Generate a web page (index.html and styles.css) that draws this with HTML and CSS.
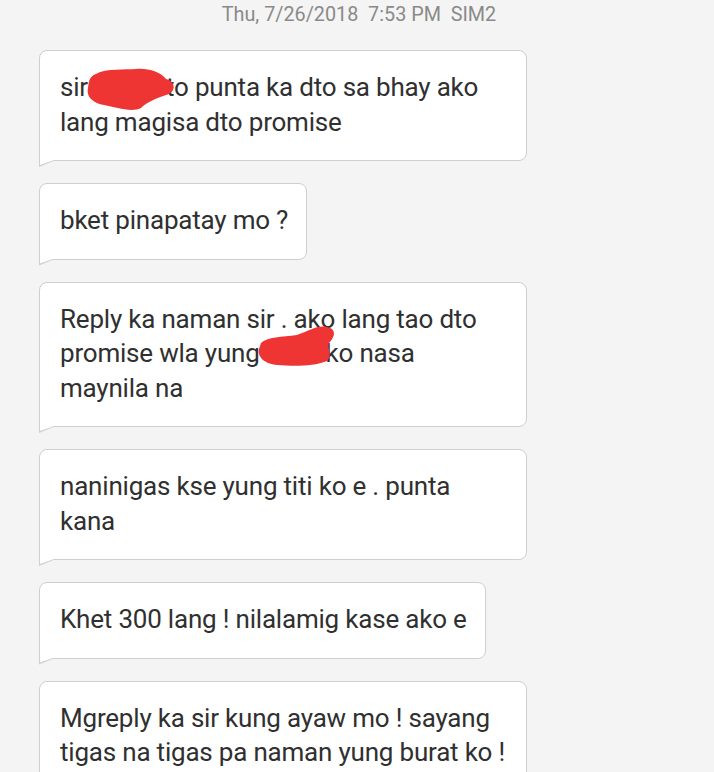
FILE: index.html
```html
<!DOCTYPE html>
<html lang="tl">
<head>
    <meta charset="UTF-8">
    <meta name="viewport" content="width=device-width, initial-scale=1.0">
    <title>Messages</title>
    <link rel="stylesheet" href="styles.css">
</head>
<body>
    <div class="thread">
        <div class="stamp">Thu, 7/26/2018  7:53 PM  SIM2</div>

        <div class="bubble">sir<span class="redact r1"><svg viewBox="0 0 90 46" width="90" height="46"><path d="M10 8 C20 2 40 4 50 3 C62 2 75 6 80 13 C88 15 91 23 83 28 C71 32 61 36 55 42 C45 47 30 41 18 39 C6 37 0 30 2 22 C3 14 4 10 10 8 Z"/></svg></span>to punta ka dto sa bhay ako lang magisa dto promise</div>

        <div class="bubble">bket pinapatay mo ?</div>

        <div class="bubble">Reply ka naman sir . ako lang tao dto promise wla yung<span class="redact r2"><svg viewBox="0 0 80 42" width="80" height="42"><path d="M4 18 C10 12 25 12 40 10 C52 6 60 0 70 2 C80 4 78 12 72 18 C70 24 76 30 70 36 C55 42 35 41 20 40 C8 39 0 32 2 24 Z"/></svg></span>ko nasa maynila na</div>

        <div class="bubble">naninigas kse yung titi ko e . punta kana</div>

        <div class="bubble">Khet 300 lang ! nilalamig kase ako e</div>

        <div class="bubble">Mgreply ka sir kung ayaw mo ! sayang tigas na tigas pa naman yung burat ko !</div>
    </div>
</body>
</html>
```

FILE: styles.css
```css
body {
    margin: 0;
    background-color: #f4f4f4;
    font-family: Roboto, "Noto Sans", sans-serif;
    color: #303030;
}
.thread {
    display: flex;
    flex-direction: column;
    align-items: flex-start;
    padding: 0 0 0 39px;
    height: 772px;
    overflow: hidden;
}
.stamp {
    align-self: stretch;
    margin-left: -35px;
    height: 30px;
    line-height: 30px;
    margin-bottom: 20px;
    text-align: center;
    font-size: 19.8px;
    color: #8a8a8a;
    white-space: pre;
}
.bubble {
    position: relative;
    flex-shrink: 0;
    max-width: 448px;
    padding: 19px 18px 21px 20px;
    margin-bottom: 22px;
    background: white;
    border: 1px solid #cfcfcf;
    border-radius: 8px 8px 8px 0;
    font-size: 26px;
    letter-spacing: -0.2px;
    line-height: 34.5px;
}
.bubble::before {
    content: "";
    position: absolute;
    left: -1px;
    top: 100%;
    width: 17px;
    height: 7px;
    background: #cfcfcf;
    clip-path: polygon(0 0, 100% 0, 0 100%);
}
.bubble::after {
    content: "";
    position: absolute;
    left: 0;
    top: 100%;
    width: 14px;
    height: 5px;
    background: white;
    clip-path: polygon(0 0, 100% 0, 0 100%);
}
.redact {
    position: relative;
    display: inline-block;
    height: 1em;
}
.redact svg {
    position: absolute;
    fill: #ef3434;
}
.r1 {
    width: 78px;
}
.r1 svg {
    left: -2px;
    top: -4px;
}
.r2 {
    width: 66px;
}
.r2 svg {
    left: -3px;
    top: -11px;
}
```
